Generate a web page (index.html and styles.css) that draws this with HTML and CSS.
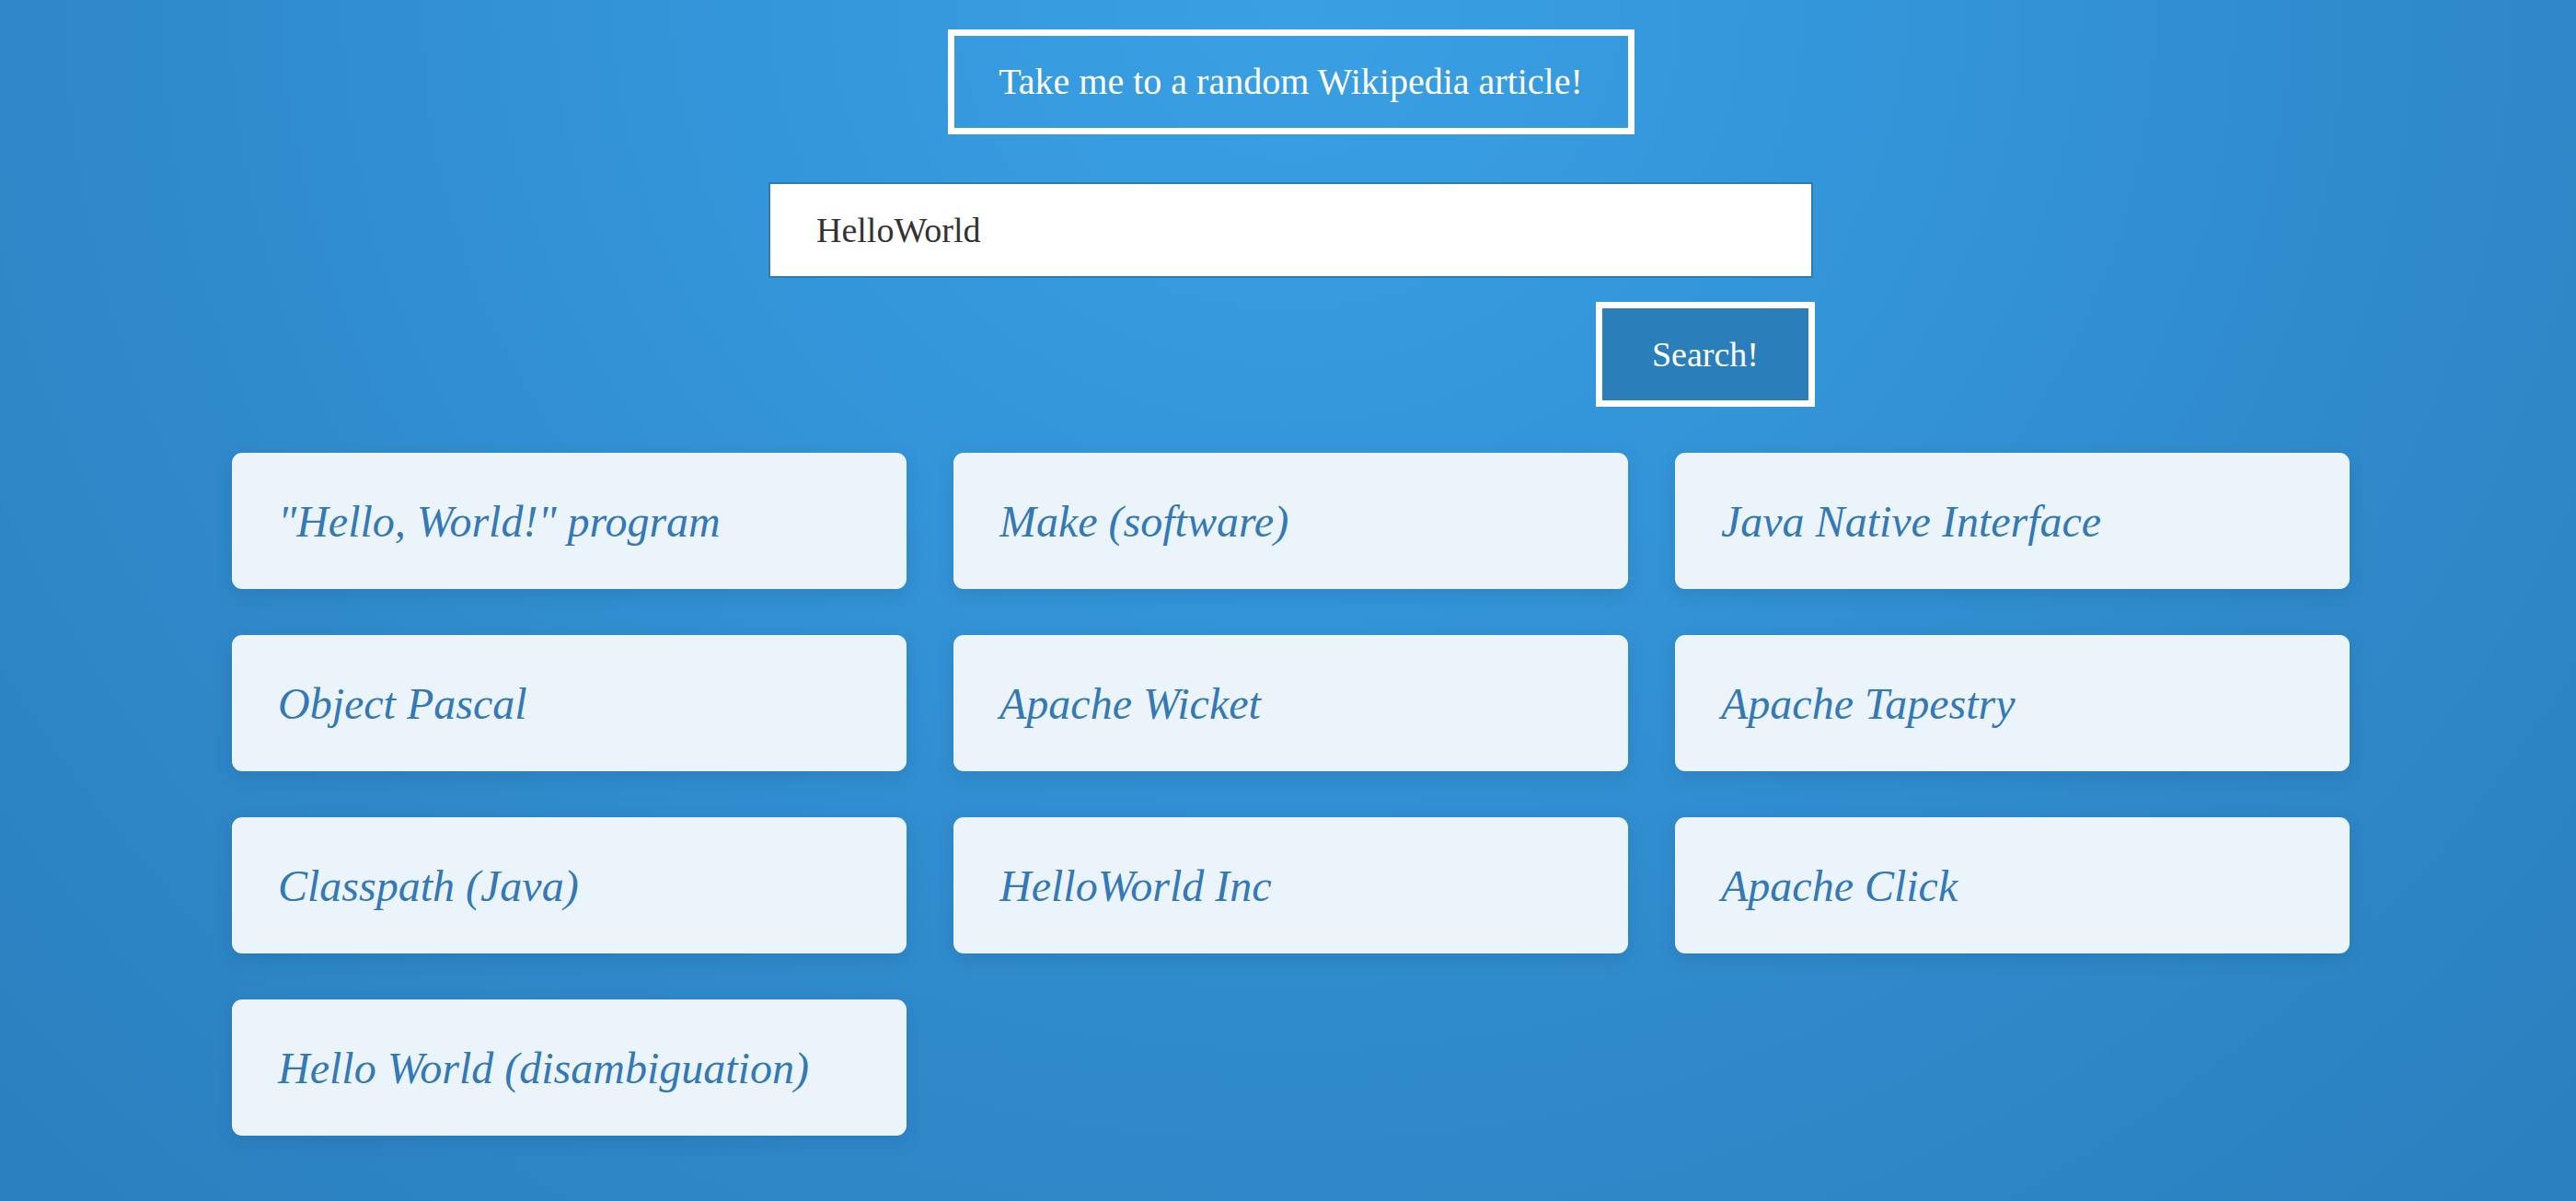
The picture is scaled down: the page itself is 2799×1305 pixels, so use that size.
FILE: index.html
```html
<!DOCTYPE html>
<html lang="en">
<head>
<meta charset="utf-8">
<title>Wikipedia Viewer</title>
<link rel="stylesheet" href="styles.css">
</head>
<body>
  <main class="page">
    <div class="random-row">
      <a class="random-btn" href="#">Take me to a random Wikipedia article!</a>
    </div>
    <form class="search-form">
      <input class="search-input" type="text" value="HelloWorld">
      <div class="search-actions">
        <button class="search-btn" type="button">Search!</button>
      </div>
    </form>
    <section class="results">
      <a class="card" href="#">"Hello, World!" program</a>
      <a class="card" href="#">Make (software)</a>
      <a class="card" href="#">Java Native Interface</a>
      <a class="card" href="#">Object Pascal</a>
      <a class="card" href="#">Apache Wicket</a>
      <a class="card" href="#">Apache Tapestry</a>
      <a class="card" href="#">Classpath (Java)</a>
      <a class="card" href="#">HelloWorld Inc</a>
      <a class="card" href="#">Apache Click</a>
      <a class="card" href="#">Hello World (disambiguation)</a>
    </section>
  </main>
</body>
</html>
```

FILE: styles.css
```css
html, body {
  margin: 0;
  padding: 0;
}

body {
  min-height: 100vh;
  font-family: "Liberation Serif", "Times New Roman", serif;
  background: radial-gradient(ellipse farthest-corner at 50% 0%, #3aa0e3 0%, #3496da 30%, #2f89ca 65%, #2b80bf 100%);
  background-attachment: fixed;
}

.page {
  padding: 32px 0 40px 6px;
  display: flex;
  flex-direction: column;
  align-items: center;
}

.random-row {
  display: flex;
  justify-content: center;
}

.random-btn {
  box-sizing: border-box;
  display: flex;
  justify-content: center;
  align-items: center;
  width: 746px;
  height: 114px;
  border: 7px solid #ffffff;
  padding: 0;
  font-size: 40px;
  line-height: 44px;
  color: #ffffff;
  text-decoration: none;
}

.search-form {
  margin-top: 52px;
  width: 1135px;
  display: flex;
  flex-direction: column;
}

.search-input {
  box-sizing: border-box;
  width: 100%;
  height: 104px;
  border: 2px solid #2a7db6;
  background: #ffffff;
  padding: 0 50px;
  font-family: "Liberation Serif", "Times New Roman", serif;
  font-size: 38px;
  color: #333333;
  outline: none;
}

.search-actions {
  margin-top: 26px;
  display: flex;
  justify-content: flex-end;
}

.search-btn {
  box-sizing: border-box;
  height: 114px;
  width: 238px;
  border: 7px solid #ffffff;
  background: #2a7fba;
  color: #ffffff;
  font-family: "Liberation Serif", "Times New Roman", serif;
  font-size: 38px;
  padding: 0;
  margin-right: -2px;
}

.results {
  margin-top: 50px;
  width: 2301px;
  display: grid;
  grid-template-columns: repeat(3, 1fr);
  column-gap: 51px;
  row-gap: 50px;
}

.card {
  box-sizing: border-box;
  height: 148px;
  display: flex;
  align-items: center;
  padding: 0 50px;
  background: #ebf4fb;
  border-radius: 11px;
  box-shadow: 0 6px 18px rgba(20, 70, 120, 0.18);
  color: #3479b6;
  font-style: italic;
  font-size: 48px;
  text-decoration: none;
}
```
